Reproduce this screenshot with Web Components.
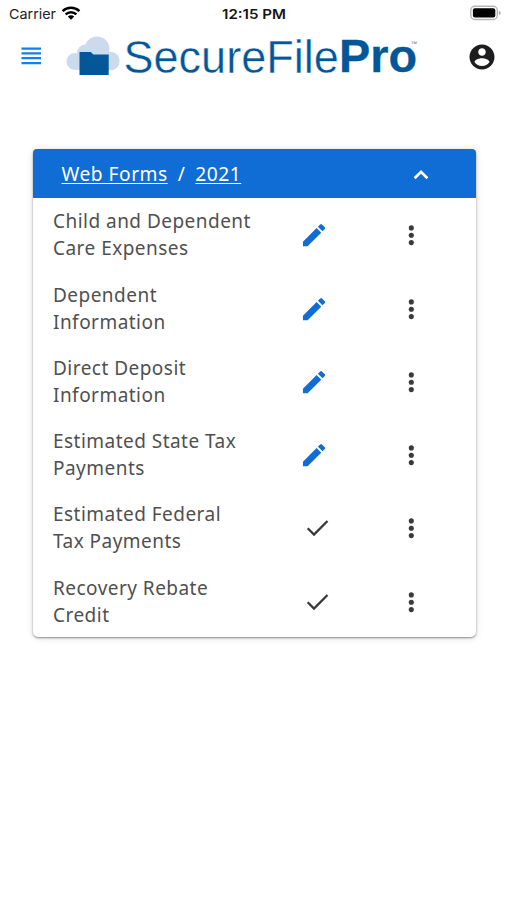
<!DOCTYPE html>
<html lang="en">
<head>
<meta charset="utf-8">
<title>SecureFilePro</title>
<style>
html,body{margin:0;height:100%;background:#fff;overflow:hidden}
body{font-family:"Noto Sans","Open Sans",sans-serif;color:#505050}
</style>
</head>
<body>
<mobile-app></mobile-app>
<script>
function define(name, html, extra) {
  customElements.define(name, class extends HTMLElement {
    connectedCallback() {
      if (this.shadowRoot) return;
      this.attachShadow({mode: 'open'}).innerHTML = html;
      if (extra) extra(this, this.shadowRoot);
    }
  });
}

define('status-bar', `
<style>
:host{display:grid;grid-template-columns:1fr auto 1fr;align-items:center;height:28px;padding:0 6px 0 9px;box-sizing:border-box;font:13.3px/28px Inter,sans-serif;color:#161616}
.left{display:flex;align-items:center;gap:5px}
.left svg:last-child{margin-top:-2px;margin-left:-1px}
.time{font-weight:600;font-size:13px;margin-left:-2px}
.right{display:flex;justify-content:flex-end;margin-top:-2px}
svg{display:block}
</style>
<div class="left"><svg width="48" height="28"><text x="0" y="18.6" textLength="47" lengthAdjust="spacingAndGlyphs" fill="#222">Carrier</text></svg>
<svg width="20" height="15" viewBox="0 0 20 15" fill="none" stroke="#000" stroke-width="2.5"><path d="M1.6 5.2C6.3.7 13.7.7 18.4 5.2M4.6 8.3C7.6 5.4 12.4 5.4 15.4 8.3"/><path d="M6.8 10.5C8.6 8.8 11.4 8.8 13.2 10.5L10 13.8Z" fill="#000" stroke="none"/></svg></div>
<div class="time"><svg width="66" height="28"><text x="1" y="18.6" textLength="64" lengthAdjust="spacingAndGlyphs" fill="#161616">12:15 PM</text></svg></div>
<div class="right"><svg width="31" height="16" viewBox="0 0 31 16"><rect x=".8" y="1.3" width="26.5" height="13.2" rx="4" fill="#fff" stroke="#b5b5b5" stroke-width="1.4"/><rect x="2.9" y="3.3" width="22.4" height="9.3" rx="2" fill="#000"/><path d="M28.8 5.7q2 .7 2 2.2t-2 2.2z" fill="#aaa"/></svg></div>
`);

define('brand-logo', `
<style>:host{display:block}svg{display:block;overflow:visible}text{font-family:"Liberation Sans",Arial,sans-serif;fill:#035799}</style>
<svg width="356" height="58" viewBox="64 28 356 58" role="img" aria-label="SecureFilePro">
<g fill="#cbdaed"><circle cx="97" cy="49" r="12.5"/><circle cx="85.5" cy="53" r="8.5"/><circle cx="75" cy="61.5" r="8.5"/><circle cx="110.5" cy="61" r="9.2"/><path d="M79 50H106L111 70H75Z"/></g>
<path d="M79.5 52h11.3l2.5 2.6h15.4V75H79.5z" fill="#035799"/>
<text x="123.5" y="72.5" font-size="46.6" textLength="215.3" lengthAdjust="spacingAndGlyphs" stroke="#fff" stroke-width=".4">SecureFile</text>
<text x="339" y="72.3" font-size="46" font-weight="700" textLength="78" lengthAdjust="spacingAndGlyphs" stroke="#035799" stroke-width=".3">Pro</text>
<text x="410.6" y="46" font-size="6.6" style="fill:#777">™</text>
</svg>`);

define('app-header', `
<style>
:host{display:flex;height:58px;align-items:flex-start;padding:0 10px 0 21px;box-sizing:border-box}
.menu{margin:19px 22px 0 0;display:block}
.user{margin:14.3px 0 0 47.5px;display:block;flex:none}
brand-logo{flex:none}
</style>
<svg class="menu" width="21" height="20" viewBox="0 0 21 20" stroke="#1480ee" stroke-width="2.3"><path d="M.5 1.3h20M.5 6.3h20M.5 11.2h20M.5 16.2h20"/></svg>
<brand-logo></brand-logo>
<svg class="user" width="30" height="30" viewBox="0 0 24 24" fill="#1d1d1f"><path d="M12 2C6.48 2 2 6.48 2 12s4.48 10 10 10 10-4.48 10-10S17.52 2 12 2zm0 3c1.66 0 3 1.34 3 3s-1.34 3-3 3-3-1.34-3-3 1.34-3 3-3zm0 14.2c-2.5 0-4.71-1.28-6-3.22.03-1.99 4-3.08 6-3.08 1.99 0 5.97 1.09 6 3.08-1.29 1.94-3.5 3.22-6 3.22z"/></svg>
`);

define('form-row', `
<style>
:host{display:grid;grid-template-columns:200.5px 1fr 90px;align-items:center;height:73.3px;padding-left:20.5px;box-sizing:border-box}
.name{font-size:19px;line-height:27px;letter-spacing:.47px}
.state{display:flex;padding-left:45.5px}
svg{display:block}
.more{margin-left:10.5px}
</style>
<div class="name"><slot></slot></div><div class="state"></div>
<svg class="more" width="30" height="30" viewBox="0 0 30 30" fill="#3a3a3a"><circle cx="15.3" cy="7.9" r="2.55"/><circle cx="15.3" cy="15.2" r="2.55"/><circle cx="15.3" cy="22.6" r="2.55"/></svg>
`, (host, root) => {
  root.querySelector('.state').innerHTML = host.hasAttribute('done')
    ? '<svg width="36" height="30" viewBox="0 0 36 30" fill="none" stroke="#3a3a3a" stroke-width="2.3"><path d="M8.7 15.3L15 21.6L28.5 8"/></svg>'
    : '<svg width="30" height="30" viewBox="-.2 -.3 24.3 24.3" fill="#0f6dd5"><path d="M3 17.25V21h3.75L17.81 9.94l-3.75-3.75L3 17.25zM20.71 7.04a1 1 0 0 0 0-1.41l-2.34-2.34a1 1 0 0 0-1.41 0l-1.83 1.83 3.75 3.75 1.83-1.83z"/></svg>';
});

define('forms-card', `
<style>
:host{display:block;width:443px;height:488.4px;border-radius:5px;background:#fff;box-shadow:0 1px 2px rgba(0,0,0,.4),0 1px 7px rgba(0,0,0,.14)}
header{display:flex;align-items:center;justify-content:space-between;height:48.6px;padding:0 39.5px 0 29px;background:#0f6dd5;color:#fff;border-radius:4px 4px 0 0;box-sizing:border-box}
nav{display:flex;font-size:19.2px;line-height:26px;letter-spacing:.5px;padding-top:1px}
a{color:#fff;text-decoration:underline;text-decoration-thickness:1.4px;text-underline-offset:2px}
.sep{margin:0 10px}
svg{display:block}
.rows{padding-top:1px}
</style>
<header><nav><a>Web Forms</a><span class="sep">/</span><a>2021</a></nav>
<svg width="30" height="30" viewBox="0 0 30 30" fill="none" stroke="#fff" stroke-width="2.7"><path d="M8.6 20.2L15 13.8L21.4 20.2"/></svg></header>
<div class="rows"><slot></slot></div>`);

define('mobile-app', `
<style>:host{display:flex;flex-direction:column;height:900px;width:507px}forms-card{margin:63px 0 0 32.5px}</style>
<status-bar></status-bar>
<app-header></app-header>
<forms-card>
<form-row>Child and Dependent Care Expenses</form-row>
<form-row>Dependent Information</form-row>
<form-row>Direct Deposit Information</form-row>
<form-row>Estimated State Tax Payments</form-row>
<form-row done>Estimated Federal Tax Payments</form-row>
<form-row done>Recovery Rebate Credit</form-row>
</forms-card>`);
</script>
</body>
</html>
